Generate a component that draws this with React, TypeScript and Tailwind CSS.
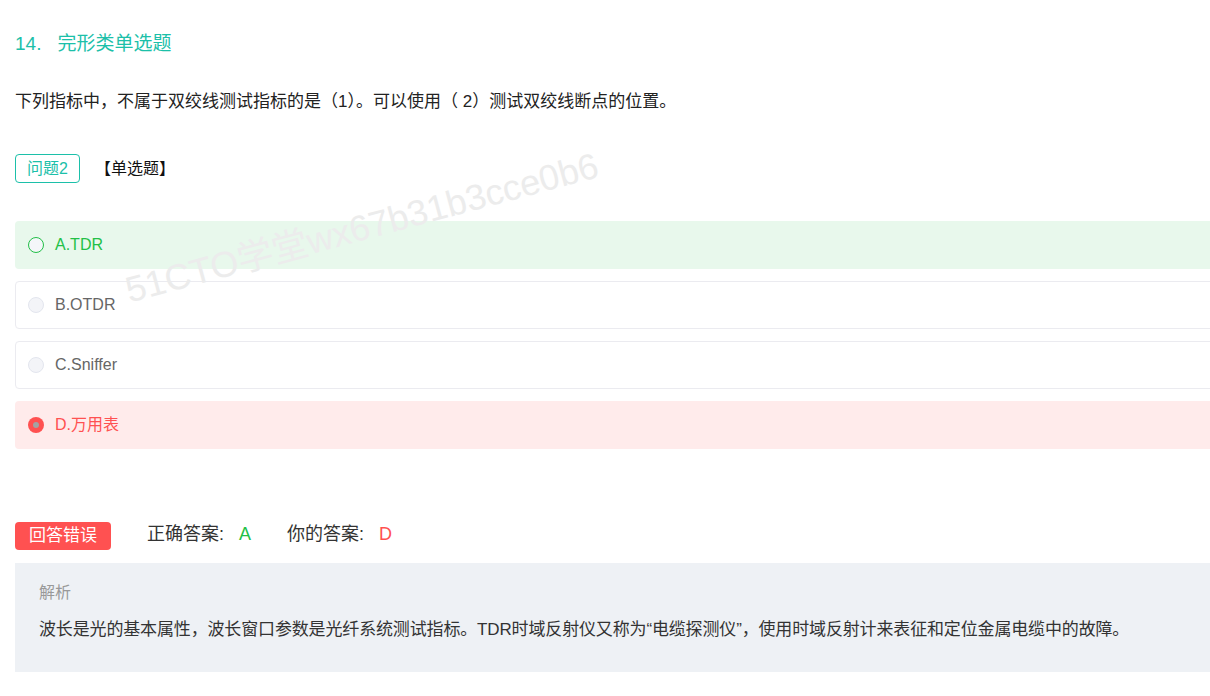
import React from "react";

const font = { fontFamily: '"Liberation Sans", "Noto Sans CJK SC", sans-serif' };

function Radio({ kind }: { kind: "correct" | "plain" | "wrong" }) {
  if (kind === "correct")
    return <span className="block w-[16px] h-[16px] rounded-full border border-[#22c047] bg-[#f4f6f9] shrink-0" />;
  if (kind === "wrong")
    return (
      <span className="flex items-center justify-center w-[16px] h-[16px] rounded-full bg-[#ff5151] shrink-0">
        <span className="block w-[6px] h-[6px] rounded-full bg-[#a3a3a3]" />
      </span>
    );
  return <span className="block w-[16px] h-[16px] rounded-full border border-[#e3e6ee] bg-[#f3f4f8] shrink-0" />;
}

export default function App() {
  return (
    <div className="relative w-[1210px] h-[696px] overflow-hidden bg-white text-[#333]" style={font}>
      <div className="w-[1225px] pl-[15px]">
        <div className="pt-[32px] h-[56px] text-[19px] leading-[24px] text-[#1cc0a9] flex">
          <span>14.</span>
          <span className="ml-[16px]">完形类单选题</span>
        </div>
        <div className="mt-[34px] text-[17px] leading-[24px] text-[#222]">
          下列指标中，不属于双绞线测试指标的是（1）。可以使用（ 2）测试双绞线断点的位置。
        </div>
        <div className="mt-[40px] flex items-center">
          <span className="flex items-center justify-center w-[65px] h-[29px] rounded-[4px] border border-[#1cc0a9] text-[#1cc0a9] text-[16px]">
            问题2
          </span>
          <span className="ml-[15px] text-[16px] text-[#111]">【单选题】</span>
        </div>
        <div className="mt-[38px] flex flex-col gap-[12px]">
          <div className="h-[48px] rounded-[4px] bg-[#e8f8ec] flex items-center pl-[13px]">
            <Radio kind="correct" />
            <span className="ml-[11px] text-[16px] text-[#22c047]">A.TDR</span>
          </div>
          <div className="h-[48px] rounded-[4px] border border-[#ebebf0] flex items-center pl-[12px]">
            <Radio kind="plain" />
            <span className="ml-[11px] text-[16px] text-[#666]">B.OTDR</span>
          </div>
          <div className="h-[48px] rounded-[4px] border border-[#ebebf0] flex items-center pl-[12px]">
            <Radio kind="plain" />
            <span className="ml-[11px] text-[16px] text-[#666]">C.Sniffer</span>
          </div>
          <div className="h-[48px] rounded-[4px] bg-[#ffebeb] flex items-center pl-[13px]">
            <Radio kind="wrong" />
            <span className="ml-[11px] text-[16px] text-[#ff5151]">D.万用表</span>
          </div>
        </div>
        <div className="mt-[73px] flex items-center h-[28px]">
          <span className="flex items-center justify-center w-[96px] h-[28px] rounded-[4px] bg-[#ff5151] text-white text-[17px] leading-[28px]">
            回答错误
          </span>
          <span className="ml-[36px] text-[18px] leading-[24px] -mt-[4px] text-[#333]">正确答案:</span>
          <span className="ml-[15px] text-[18px] leading-[24px] -mt-[4px] text-[#22c047]">A</span>
          <span className="ml-[36px] text-[18px] leading-[24px] -mt-[4px] text-[#333]">你的答案:</span>
          <span className="ml-[15px] text-[18px] leading-[24px] -mt-[4px] text-[#ff5151]">D</span>
        </div>
        <div className="mt-[13px] w-[1195px] bg-[#eef1f5] pt-[18px] pb-[30px] pl-[24px]">
          <div className="text-[16px] leading-[24px] text-[#999]">解析</div>
          <div className="mt-[13px] text-[17px] leading-[24px] text-[#333] tracking-[-0.15px]">
            波长是光的基本属性，波长窗口参数是光纤系统测试指标。TDR时域反射仪又称为“电缆探测仪”，使用时域反射计来表征和定位金属电缆中的故障。
          </div>
        </div>
      </div>
      <div
        className="absolute left-[117px] top-[208px] w-[490px] text-center text-[36px] leading-[40px] text-[#ececec] -rotate-[15deg] pointer-events-none whitespace-nowrap"
      >
        51CTO学堂wx67b31b3cce0b6
      </div>
    </div>
  );
}
